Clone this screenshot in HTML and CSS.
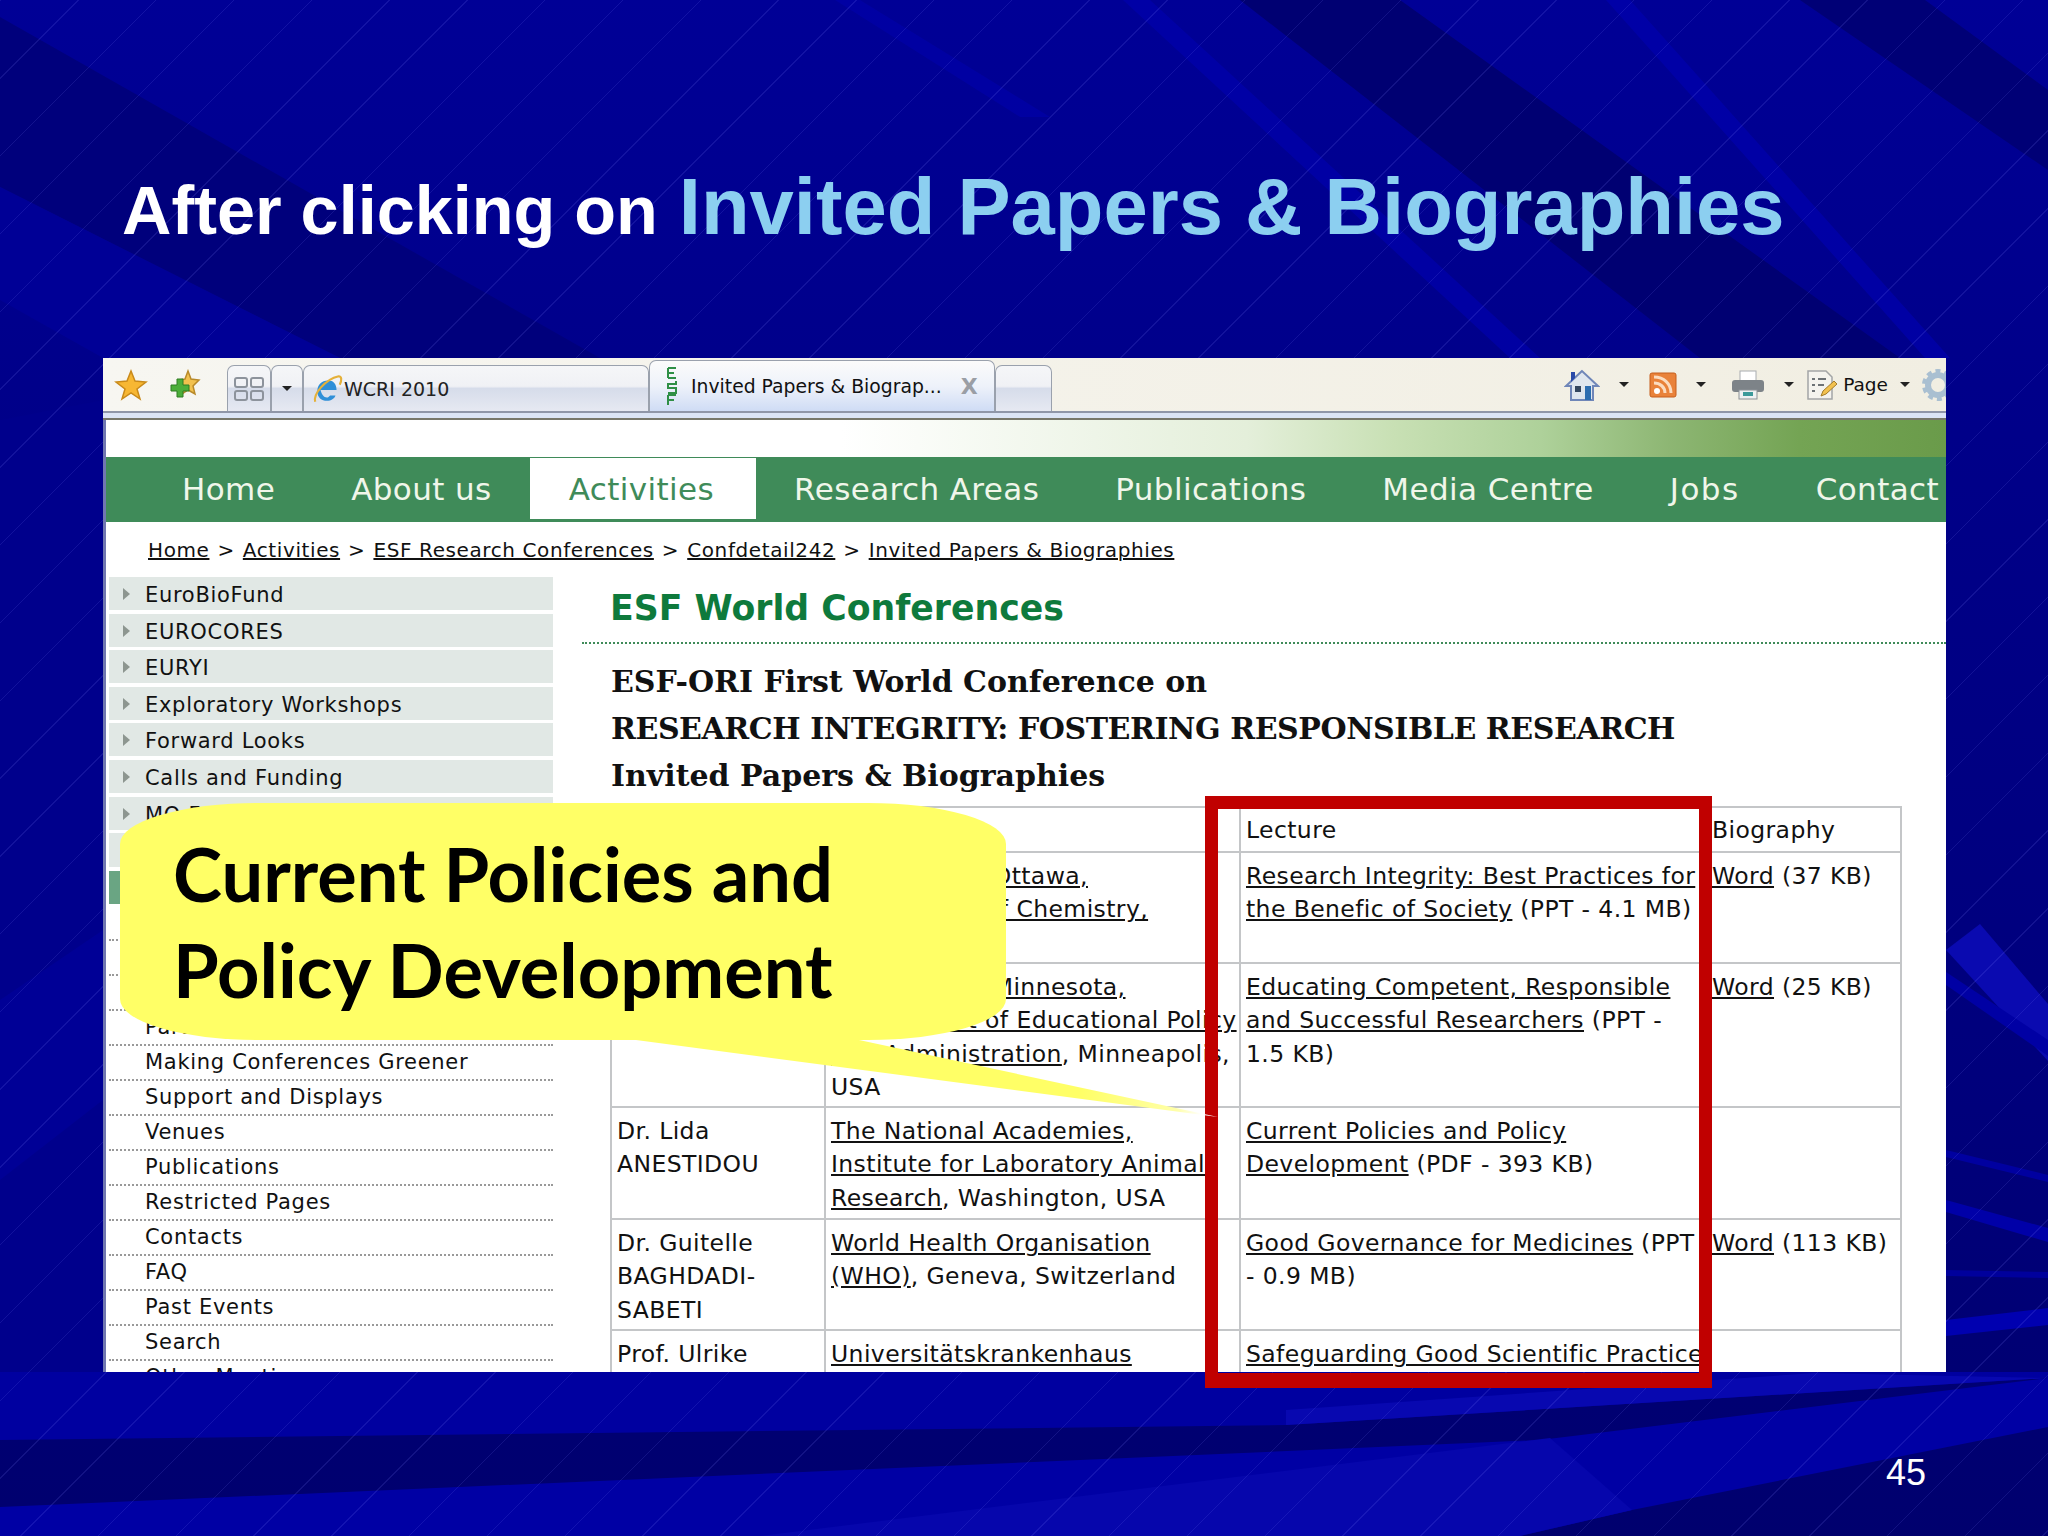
FILE: index.html
```html
<!DOCTYPE html>
<html lang="en">
  <head>
    <meta charset="UTF-8" />
    <title>Invited Papers &amp; Biographies</title>
    <link rel="stylesheet" href="styles.css">
  </head>
  <body>
    <div class="slide">
      <svg class="slide-bg" viewBox="0 0 2048 1536" width="2048" height="1536">
        <defs>
          <linearGradient id="bgFade" x1="0" y1="0" x2="0" y2="1">
            <stop offset="0" stop-color="#000096" />
            <stop offset="0.25" stop-color="#00008a" />
            <stop offset="0.7" stop-color="#00007c" />
            <stop offset="1" stop-color="#00006e" />
          </linearGradient>
        </defs>
        <rect width="2048" height="1536" fill="url(#bgFade)" />
        <!-- upper bands -->
        <polygon points="0,17 600,358 340,358 0,187" fill="#00007c" />
        <polygon points="0,187 340,358 103,358 0,300" fill="#000096" />
        <polygon points="835,0 860,0 1050,117 1020,117" fill="#0000ac" opacity="0.6" />
        <polygon points="1123,0 1150,0 1540,358 1510,358" fill="#0000ac" opacity="0.7" />
        <polygon points="1240,0 1400,0 1900,358 1700,358" fill="#000072" />
        <polygon points="1606,0 1630,0 1950,358 1925,358" fill="#0000ae" opacity="0.7" />
        <polygon points="1800,0 1925,0 2048,90 2048,170" fill="#000076" />
        <!-- left margin -->
        <polygon points="0,420 103,400 103,1372 0,1372" fill="#00008c" />
        <polygon points="0,1000 103,930 103,1100 0,1180" fill="#0000a0" opacity="0.5" />
        <!-- right margin rays -->
        <polygon points="1946,950 1980,924 2048,1004 2048,1061" fill="#0a0ab0" />
        <polygon points="1946,972 2048,1040 2048,1056 1946,985" fill="#0000a4" />
        <polygon points="1946,1150 2048,1175 2048,1182 1946,1157" fill="#0000a0" />
        <polygon points="1946,1200 2048,1228 2048,1242 1946,1212" fill="#0000a8" />
        <polygon points="1946,1270 2048,1272 2048,1278 1946,1276" fill="#00009c" />
        <polygon points="1946,1320 2048,1308 2048,1325 1946,1336" fill="#0000b0" />
        <!-- bottom bands -->
        <polygon points="0,1372 2048,1372 2048,1378 1286,1425 0,1440" fill="#0000a0" />
        <polygon points="1286,1410 1815,1373 2048,1378 1286,1425" fill="#0808b0" />
        <polygon points="0,1507 1540,1440 2048,1378 2048,1427 1632,1510 1520,1536 0,1536" fill="#0000a4" />
        <polygon points="760,1536 1550,1438 1632,1510 1520,1536" fill="#0606ac" />
      </svg>
      <div class="hatch"></div>

      <h1 class="slide-title">
        <span class="title-white">After clicking on</span>
        <span class="title-blue">Invited Papers &amp; Biographies</span>
      </h1>

      <div class="window">
        <div class="toolbar">
          <div class="toolbar-left">
            <svg class="ico" width="36" height="32" viewBox="0 0 36 32">
              <polygon points="18,2 22,12 33,13 24,20 27,30 18,24 9,30 12,20 3,13 14,12" fill="#f7b733" stroke="#c98a1a" stroke-width="1.5" />
            </svg>
            <svg class="ico ico-add" width="36" height="32" viewBox="0 0 36 32">
              <polygon points="22,2 25,10 33,11 27,17 29,25 22,21 16,25 17,17 12,11 19,10" fill="#f2c14e" stroke="#b98a2a" stroke-width="1.5" />
              <path d="M11 10h6v6h6v6h-6v6h-6v-6H5v-6h6z" fill="#4cae3a" stroke="#2e7d22" stroke-width="1" />
            </svg>
            <div class="tab tab-grid">
              <svg width="30" height="24" viewBox="0 0 30 24">
                <g fill="none" stroke="#8d939c" stroke-width="2">
                  <rect x="1" y="1" width="12" height="9" rx="2" />
                  <rect x="17" y="1" width="12" height="9" rx="2" />
                  <rect x="1" y="14" width="12" height="9" rx="2" />
                  <rect x="17" y="14" width="12" height="9" rx="2" />
                </g>
              </svg>
            </div>
            <div class="tab tab-arrow"><span class="caret"></span></div>
            <div class="tab tab-wcri">
              <svg width="32" height="32" viewBox="0 0 30 30">
                <path d="M8 16h15c0-6-3-9-8-9-6 0-10 4-10 10s4 9 9 9c4 0 7-2 8-5h-5c-1 1-2 2-3 2-3 0-5-3-6-7z" fill="#2f8fd8" />
                <path d="M3 27C1 20 12 6 25 3c3 0 3 4 1 8" fill="none" stroke="#e5b13a" stroke-width="2" />
              </svg>
              <span>WCRI 2010</span>
            </div>
            <div class="tab tab-active">
              <svg width="12" height="40" viewBox="0 0 12 40">
                <path d="M2 2h8M2 2v10M2 7h6M2 12h8M10 15v3H2v4h8v5H2M2 29h8M2 29v10M2 34h6" fill="none" stroke="#2f8f46" stroke-width="2" />
              </svg>
              <span class="tab-active-label">Invited Papers &amp; Biograp...</span>
              <span class="tab-close">X</span>
            </div>
            <div class="tab tab-new"></div>
          </div>
          <div class="toolbar-right">
            <svg width="36" height="34" viewBox="0 0 36 34">
              <path d="M18 3L2 18h5v14h22V18h5z" fill="#dfe6ee" stroke="#6f86b8" stroke-width="2" />
              <path d="M7 4h4v6l-4 4z" fill="#2a4aa8" />
              <rect x="11" y="18" width="6" height="6" fill="#33465e" />
              <rect x="21" y="18" width="6" height="14" fill="#2c6db0" />
            </svg>
            <span class="caret caret-bar"></span>
            <svg class="ico-rss" width="28" height="26" viewBox="0 0 28 26">
              <rect x="1" y="1" width="26" height="24" rx="2" fill="#e9823a" stroke="#c65f1c" />
              <circle cx="8" cy="19" r="3" fill="#fff" />
              <path d="M5 11c6 0 11 4 11 10M5 5c10 0 17 7 17 16" fill="none" stroke="#fbdcc0" stroke-width="3" />
            </svg>
            <span class="caret caret-bar"></span>
            <svg class="ico-print" width="34" height="30" viewBox="0 0 34 30">
              <rect x="9" y="1" width="16" height="10" fill="#fff" stroke="#a8acb0" />
              <rect x="1" y="10" width="32" height="12" rx="3" fill="#7d8388" />
              <rect x="8" y="20" width="18" height="9" fill="#eef1f2" stroke="#8c9195" />
              <rect x="12" y="22" width="10" height="4" fill="#3c9a9a" />
            </svg>
            <span class="caret caret-bar"></span>
            <svg class="ico-page" width="32" height="30" viewBox="0 0 32 30">
              <path d="M1 1h18l6 6v22H1z" fill="#f4f3ee" stroke="#a3a5a6" stroke-width="1.5" />
              <path d="M5 9h3M5 15h3M5 21h3M11 9h8M11 15h6" stroke="#6d7276" stroke-width="2" />
              <path d="M14 26l2-5 11-10 3 3-11 10z" fill="#f2c14e" stroke="#a37c2a" />
            </svg>
            <span class="page-label">Page</span>
            <span class="caret caret-bar"></span>
            <svg class="ico-gear" width="32" height="32" viewBox="0 0 32 32">
              <circle cx="16" cy="16" r="10" fill="none" stroke="#a9bfd1" stroke-width="6" />
              <circle cx="16" cy="16" r="14" fill="none" stroke="#a9bfd1" stroke-width="4" stroke-dasharray="5 4" />
            </svg>
          </div>
        </div>
        <div class="toolbar-strip"></div>
        <div class="page-frame">
          <div class="banner"></div>
          <nav class="site-nav">
            <a>Home</a>
            <a>About us</a>
            <a class="nav-active">Activities</a>
            <a>Research Areas</a>
            <a>Publications</a>
            <a>Media Centre</a>
            <a class="nav-jobs">Jobs</a>
            <a>Contact</a>
          </nav>
          <div class="breadcrumb">
            <u>Home</u><span class="sep">&gt;</span><u>Activities</u><span class="sep">&gt;</span><u>ESF Research Conferences</u><span class="sep">&gt;</span><u>Confdetail242</u><span class="sep">&gt;</span><u>Invited Papers &amp; Biographies</u>
          </div>
          <div class="page-body">
            <aside class="sidebar">
              <ul class="side-main">
                <li>EuroBioFund</li>
                <li>EUROCORES</li>
                <li>EURYI</li>
                <li>Exploratory Workshops</li>
                <li>Forward Looks</li>
                <li>Calls and Funding</li>
                <li>MO Fora</li>
                <li class="side-blank"></li>
                <li class="side-current"></li>
              </ul>
              <ul class="side-sub">
                <li class="side-spacer"></li>
                <li class="side-spacer"></li>
                <li class="side-spacer"></li>
                <li>Participants</li>
                <li>Making Conferences Greener</li>
                <li>Support and Displays</li>
                <li>Venues</li>
                <li>Publications</li>
                <li>Restricted Pages</li>
                <li>Contacts</li>
                <li>FAQ</li>
                <li>Past Events</li>
                <li>Search</li>
                <li>Other Meetings</li>
              </ul>
            </aside>
            <main class="content">
              <h2 class="content-head">ESF World Conferences</h2>
              <div class="content-titles">
                <p>ESF-ORI First World Conference on</p>
                <p class="title-caps">RESEARCH INTEGRITY: FOSTERING RESPONSIBLE RESEARCH</p>
                <p>Invited Papers &amp; Biographies</p>
              </div>
              <table class="papers">
                <colgroup>
                  <col class="col-name" />
                  <col class="col-inst" />
                  <col class="col-lecture" />
                  <col class="col-bio" />
                </colgroup>
                <tr class="row-head">
                  <td></td>
                  <td></td>
                  <td>Lecture</td>
                  <td>Biography</td>
                </tr>
                <tr class="row-1">
                  <td></td>
                  <td><u>University of Ottawa,</u><br /><u>Department of Chemistry,</u></td>
                  <td><u>Research Integrity: Best Practices for</u><br /><u>the Benefic of Society</u> (PPT - 4.1 MB)</td>
                  <td><u>Word</u> (37 KB)</td>
                </tr>
                <tr class="row-2">
                  <td></td>
                  <td><u>University of Minnesota,</u><br /><u>Department of Educational Policy</u><br /><u>and Administration</u>, Minneapolis,<br />USA</td>
                  <td><u>Educating Competent, Responsible</u><br /><u>and Successful Researchers</u> (PPT -<br />1.5 KB)</td>
                  <td><u>Word</u> (25 KB)</td>
                </tr>
                <tr class="row-3">
                  <td>Dr. Lida<br />ANESTIDOU</td>
                  <td><u>The National Academies,</u><br /><u>Institute for Laboratory Animal</u><br /><u>Research</u>, Washington, USA</td>
                  <td><u>Current Policies and Policy</u><br /><u>Development</u> (PDF - 393 KB)</td>
                  <td></td>
                </tr>
                <tr class="row-4">
                  <td>Dr. Guitelle<br />BAGHDADI-<br />SABETI</td>
                  <td><u>World Health Organisation</u><br /><u>(WHO)</u>, Geneva, Switzerland</td>
                  <td><u>Good Governance for Medicines</u> (PPT<br />- 0.9 MB)</td>
                  <td><u>Word</u> (113 KB)</td>
                </tr>
                <tr class="row-5">
                  <td>Prof. Ulrike</td>
                  <td><u>Universitätskrankenhaus</u></td>
                  <td><u>Safeguarding Good Scientific Practice</u></td>
                  <td></td>
                </tr>
              </table>
            </main>
          </div>
        </div>
      </div>

      <div class="red-box"></div>

      <svg class="callout-shape" viewBox="0 0 1120 330" width="1120" height="330">
        <defs>
          <linearGradient id="tailFade" gradientUnits="userSpaceOnUse" x1="960" y1="290" x2="1099" y2="315">
            <stop offset="0" stop-color="#ffff66" />
            <stop offset="0.7" stop-color="#ffffa8" />
            <stop offset="0.88" stop-color="#ffffff" />
          </linearGradient>
        </defs>
        <path d="M517 238 L740 238 L1099 315 Z" fill="url(#tailFade)" />
        <path d="M139 1 L749 1 A138 41 0 0 1 887 42 L887 197 A138 41 0 0 1 749 238 L139 238 A138 41 0 0 1 1 197 L1 42 A138 41 0 0 1 139 1 Z" fill="#ffff66" />
      </svg>
      <div class="callout-text">Current Policies and<br />Policy Development</div>

      <div class="slide-num">45</div>
    </div>
  </body>
</html>
```

FILE: styles.css
```css
* {
  margin: 0;
  padding: 0;
  box-sizing: border-box;
}
body {
  width: 2048px;
  height: 1536px;
  overflow: hidden;
  background: #000070;
  font-family: "DejaVu Sans", sans-serif;
}
ul {
  list-style: none;
}
.slide {
  position: relative;
  width: 2048px;
  height: 1536px;
  overflow: hidden;
}
.slide-bg {
  position: absolute;
  top: 0;
  left: 0;
}
.hatch {
  position: absolute;
  top: 0;
  left: 0;
  width: 2048px;
  height: 1536px;
  background: repeating-linear-gradient(135deg, rgba(130, 130, 255, 0.14) 0 1px, transparent 1px 55px);
}
.slide-title {
  position: absolute;
  left: 122px;
  top: 161px;
  display: flex;
  align-items: baseline;
  gap: 21px;
  font-family: "Liberation Sans", Arial, sans-serif;
  font-weight: 700;
  white-space: nowrap;
}
.title-white {
  color: #fff;
  font-size: 68.4px;
}
.title-blue {
  color: #8ccff0;
  font-size: 79.6px;
}
.slide-num {
  position: absolute;
  left: 1886px;
  top: 1452px;
  color: #fff;
  font-family: "Liberation Sans", Arial, sans-serif;
  font-size: 36px;
}

/* screenshot of the browser */
.window {
  position: absolute;
  left: 103px;
  top: 358px;
  width: 1843px;
  height: 1014px;
  overflow: hidden;
  background: #7077b0;
  color: #111;
}
.toolbar {
  display: flex;
  justify-content: space-between;
  height: 53px;
  background: linear-gradient(90deg, #f7f6f1 0, #f1eee2 100%);
}
.toolbar-left {
  display: flex;
  align-items: flex-end;
}
.ico {
  align-self: center;
  margin: 0 0 0 10px;
}
.ico-add {
  margin-left: 17px;
  margin-right: 25px;
}
.tab {
  display: flex;
  align-items: center;
  height: 46px;
  border: 1px solid #9aa1ad;
  border-bottom: none;
  border-radius: 7px 7px 0 0;
  background: linear-gradient(180deg, #f5f6f8 0, #f0f1f5 45%, #d6dcea 50%, #e6e9f2 100%);
}
.tab-grid {
  width: 44px;
  justify-content: center;
}
.tab-arrow {
  width: 32px;
  justify-content: center;
}
.tab-wcri {
  width: 346px;
  gap: 0;
  padding-left: 8px;
  font-size: 19px;
  color: #222;
}
.tab-active {
  width: 346px;
  height: 51px;
  padding-left: 16px;
  gap: 13px;
  background: linear-gradient(180deg, #fbfbfb 0, #eef2fa 50%, #cfdcf5 100%);
  font-size: 18.8px;
}
.tab-close {
  margin-left: 6px;
  color: #9a9ea5;
  font-weight: 700;
  font-size: 22px;
}
.tab-new {
  width: 57px;
}
.toolbar-right {
  display: flex;
  align-items: center;
  margin-right: -8px;
}
.caret {
  display: block;
  width: 0;
  height: 0;
  border-left: 5px solid transparent;
  border-right: 5px solid transparent;
  border-top: 5px solid #222;
}
.caret-bar {
  margin: 0 20px 0 19px;
}
.ico-print {
  margin-left: 5px;
}
.ico-page {
  margin-left: -7px;
}
.page-label {
  margin-left: 4px;
  font-size: 18.5px;
}
.caret-bar:has(+ .ico-gear) {
  margin: 0 12px 0 12px;
}
.toolbar-strip {
  height: 9px;
  border-top: 2px solid #8f96a8;
  border-bottom: 2px solid #77776a;
  background: #dbe4f5;
}
.page-frame {
  margin-left: 3px;
  background: #fff;
  height: 952px;
}
.banner {
  height: 37px;
  background: linear-gradient(90deg, #fff 0, #fff 40%, #e4efda 62%, #c8e0b4 70%, #aed19a 78%, #8db673 85%, #74a454 92%, #6a9b4a 100%);
}
.site-nav {
  display: flex;
  height: 65px;
  padding-left: 38px;
  background: #3f8b59;
}
.site-nav a {
  display: flex;
  align-items: center;
  padding: 0 38px 2px;
  color: #f0f6ea;
  font-size: 31px;
  letter-spacing: 0.4px;
  white-space: nowrap;
}
.site-nav .nav-active {
  margin: 1px 0 3px;
  padding: 0 42px 0 39px;
  background: #fff;
  color: #3f8b59;
}
.site-nav .nav-jobs {
  letter-spacing: 1.5px;
}
.breadcrumb {
  display: flex;
  align-items: center;
  height: 55px;
  padding-left: 42px;
  font-size: 20px;
  letter-spacing: 0.6px;
}
.sep {
  margin: 0 8px;
}
.page-body {
  display: flex;
}
.sidebar {
  width: 444px;
  margin-left: 3px;
  flex-shrink: 0;
}
.side-main li {
  position: relative;
  height: 33px;
  margin-bottom: 3.6px;
  padding-left: 36px;
  line-height: 36px;
  font-size: 21px;
  letter-spacing: 0.7px;
  background: #e1e8e5;
}
.side-main li::before {
  content: "";
  position: absolute;
  left: 14px;
  top: 11px;
  border-left: 7px solid #8d9690;
  border-top: 6px solid transparent;
  border-bottom: 6px solid transparent;
}
.side-main .side-blank {
  height: 34px;
}
.side-main .side-current {
  height: 33px;
  background: #6aa583;
}
.side-sub {
  margin-top: -1px;
}
.side-sub li {
  height: 35px;
  padding-left: 36px;
  line-height: 33px;
  font-size: 21px;
  letter-spacing: 0.7px;
  border-bottom: 2px dotted #999;
}
.content {
  flex: 1;
  padding-left: 29px;
  min-width: 0;
}
.content-head {
  height: 67px;
  padding: 7px 0 0 28px;
  border-bottom: 2px dotted #3f8b59;
  color: #0e7a3c;
  font-size: 34.7px;
  line-height: 48px;
}
.content-titles {
  padding: 14px 0 0 29px;
  font-weight: 700;
  font-size: 30px;
  font-family: "DejaVu Serif", serif;
}
.content-titles p {
  height: 47px;
  line-height: 47px;
  white-space: nowrap;
}
.content-titles .title-caps {
  letter-spacing: -0.45px;
}
.papers {
  margin: 7px 0 0 28px;
  width: 1292px;
  border-collapse: collapse;
  table-layout: fixed;
  font-size: 23.5px;
  letter-spacing: 0.4px;
}
.papers td {
  padding: 7px 5px 0;
  border: 2px solid #c4c6c8;
  vertical-align: top;
  line-height: 33.3px;
  white-space: nowrap;
}
.col-name {
  width: 214px;
}
.col-inst {
  width: 415px;
}
.col-lecture {
  width: 466px;
}
.row-head td {
  height: 45px;
  padding-top: 6px;
}
.row-1 td {
  height: 111px;
}
.row-2 td {
  height: 144px;
}
.row-3 td {
  height: 112px;
}
.row-4 td {
  height: 111px;
}
.row-5 td {
  height: 60px;
}

/* slide annotations on top of the screenshot */
.red-box {
  position: absolute;
  left: 1205px;
  top: 796px;
  width: 507px;
  height: 592px;
  border: 13px solid #c00000;
  border-bottom-width: 15px;
}
.callout-shape {
  position: absolute;
  left: 119px;
  top: 802px;
}
.callout-text {
  position: absolute;
  left: 173px;
  top: 826px;
  color: #000;
  font-family: Lato, sans-serif;
  font-weight: 700;
  font-size: 74px;
  line-height: 96px;
  white-space: nowrap;
}
```
